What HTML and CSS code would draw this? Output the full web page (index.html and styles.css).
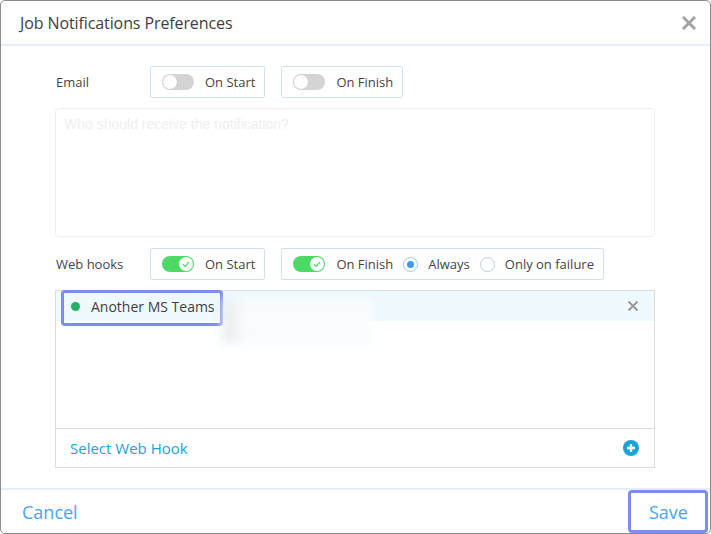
FILE: index.html
```html
<!DOCTYPE html>
<html>
<head>
<meta charset="utf-8">
<link rel="stylesheet" href="styles.css">
</head>
<body>
<div class="modal">
  <div class="header">
    <div class="title">Job Notifications Preferences</div>
    <svg class="close" width="14" height="14" viewBox="0 0 14 14"><path d="M2 2L12 12M12 2L2 12" stroke="#a3a3a3" stroke-width="3" stroke-linecap="square"/></svg>
  </div>
  <div class="content">
    <div class="row">
      <div class="label">Email</div>
      <div class="box">
        <span class="toggle off"><span class="knob"></span></span>
        <span class="txt">On Start</span>
      </div>
      <div class="box">
        <span class="toggle off"><span class="knob"></span></span>
        <span class="txt">On Finish</span>
      </div>
    </div>
    <div class="textarea">Who should receive the notification?</div>
    <div class="row">
      <div class="label">Web hooks</div>
      <div class="box">
        <span class="toggle on"><span class="knob"><svg width="10" height="10" viewBox="0 0 10 10"><path d="M2 5.2L4.2 7.3L8 3" fill="none" stroke="#4cd964" stroke-width="1.2"/></svg></span></span>
        <span class="txt">On Start</span>
      </div>
      <div class="box">
        <span class="toggle on"><span class="knob"><svg width="10" height="10" viewBox="0 0 10 10"><path d="M2 5.2L4.2 7.3L8 3" fill="none" stroke="#4cd964" stroke-width="1.2"/></svg></span></span>
        <span class="txt">On Finish</span>
        <span class="radio checked"></span>
        <span class="txt">Always</span>
        <span class="radio"></span>
        <span class="txt">Only on failure</span>
      </div>
    </div>
    <div class="list">
      <div class="hook">
        <div class="chip"><span class="dot"></span><span class="name">Another MS Teams</span></div>
        <svg class="remove" width="12" height="12" viewBox="0 0 12 12"><path d="M1.5 1.5L10.5 10.5M10.5 1.5L1.5 10.5" stroke="#9a9a9a" stroke-width="2"/></svg>
      </div>
      <div class="redact"></div>
      <div class="spacer"></div>
      <div class="select">
        <span>Select Web Hook</span>
        <svg width="16" height="16" viewBox="0 0 16 16"><circle cx="8" cy="8" r="8" fill="#17a2dc"/><path d="M8 4V12M4 8H12" stroke="#fff" stroke-width="2.4"/></svg>
      </div>
    </div>
  </div>
  <div class="footer">
    <span class="cancel">Cancel</span>
    <span class="save">Save</span>
  </div>
</div>
</body>
</html>
```
FILE: styles.css
```css
html, body { margin: 0; padding: 0; background: #fff; }
body { font-family: "Open Sans", "Liberation Sans", sans-serif; color: #444; }
.modal {
  width: 711px; height: 534px; box-sizing: border-box;
  border: 1px solid #8c8c8c; border-radius: 5px;
  display: flex; flex-direction: column; overflow: hidden;
}
.header {
  height: 45px; box-sizing: border-box; flex: none;
  border-bottom: 2px solid #e4eef6;
  display: flex; align-items: center; justify-content: space-between;
  padding: 0 14px 0 19px;
}
.title { font-size: 16px; color: #404040; letter-spacing: -0.1px; }
.close { margin-top: 1px; }
.content { flex: 1; padding: 20px 55px 0 54px; }
.row { display: flex; align-items: center; gap: 16px; height: 32px; }
.label { width: 78px; font-size: 13px; color: #444; padding-left: 1px; }
.box {
  height: 32px; box-sizing: border-box;
  border: 1px solid #cfe2f1; border-radius: 2px;
  display: flex; align-items: center; padding: 0 9px 0 11px;
  font-size: 13px; color: #444;
}
.box .txt { margin-left: 11px; margin-right: 0; }
.box .radio + .txt { margin-left: 10px; }
.box .txt + .radio { margin-left: 10px; }
.toggle {
  width: 32px; height: 16px; border-radius: 9px; position: relative;
  display: inline-block; box-sizing: border-box;
}
.toggle.off { background: #d4d4d4; }
.toggle.on { background: #4cd964; }
.knob {
  position: absolute; top: 1px; width: 14px; height: 14px; border-radius: 50%;
  background: #fff; display: flex; align-items: center; justify-content: center;
}
.toggle.off .knob { left: 1px; box-shadow: 0 0 0 0.5px #c8c8c8; }
.toggle.on .knob { right: 1px; }
.radio {
  width: 15px; height: 15px; box-sizing: border-box; border-radius: 50%;
  border: 1px solid #b9cfdf; background: #fff; display: inline-block; position: relative;
}
.radio.checked { border-color: #9fc7ec; }
.radio.checked::after {
  content: ""; position: absolute; left: 3px; top: 3px; width: 7px; height: 7px;
  border-radius: 50%; background: #3d9cf0;
}
.textarea {
  margin: 10px 0 11px 0; height: 129px; box-sizing: border-box;
  border: 1px solid #eeeeee; border-radius: 4px;
  padding: 7px 8px; font-family: "Liberation Sans", Arial, sans-serif;
  font-size: 14px; color: #efefef;
}
.list {
  margin: 10px 0 0 0; height: 178px; box-sizing: border-box;
  border: 1px solid #dcdcdc; display: flex; flex-direction: column; position: relative;
}
.hook {
  height: 30px; flex: none; background: #effafe;
  display: flex; align-items: center; justify-content: space-between;
  padding: 0 15px 0 15px; font-size: 14px; color: #404040;
  position: relative; z-index: 1;
}
.chip { display: flex; align-items: center; position: relative; }
.chip::after {
  content: ""; position: absolute; left: -10px; top: -7px; width: 162px; height: 36px;
  box-sizing: border-box; border: 3px solid #7b8ef0; border-radius: 4px;
}
.dot { width: 9px; height: 9px; border-radius: 50%; background: #24b062; margin-right: 11px; }
.redact {
  position: absolute; left: 166px; top: 8px; width: 150px; height: 44px;
  background: #fafcfd; filter: blur(5px); z-index: 2;
  box-shadow: inset 20px 0 20px -10px #e4e8ea;
}
.spacer { flex: 1; }
.select {
  height: 38px; flex: none; border-top: 1px solid #dcdcdc;
  display: flex; align-items: center; justify-content: space-between;
  padding: 0 15px 0 14px; font-size: 15px; color: #1aa3dc;
}
.footer {
  margin-top: 19px; height: 45px; box-sizing: border-box; flex: none;
  border-top: 2px solid #e4eef6;
  display: flex; align-items: center; justify-content: space-between;
  padding: 0 2px 0 21px; font-size: 18px; color: #4aa4f2;
}
.cancel { margin-top: 1px; }
.save {
  width: 80px; height: 43px; box-sizing: border-box; margin-top: -1px;
  border: 3px solid #7b8ef0; border-radius: 4px;
  display: flex; align-items: center; justify-content: center; padding-left: 1px; padding-top: 2px;
}
```
